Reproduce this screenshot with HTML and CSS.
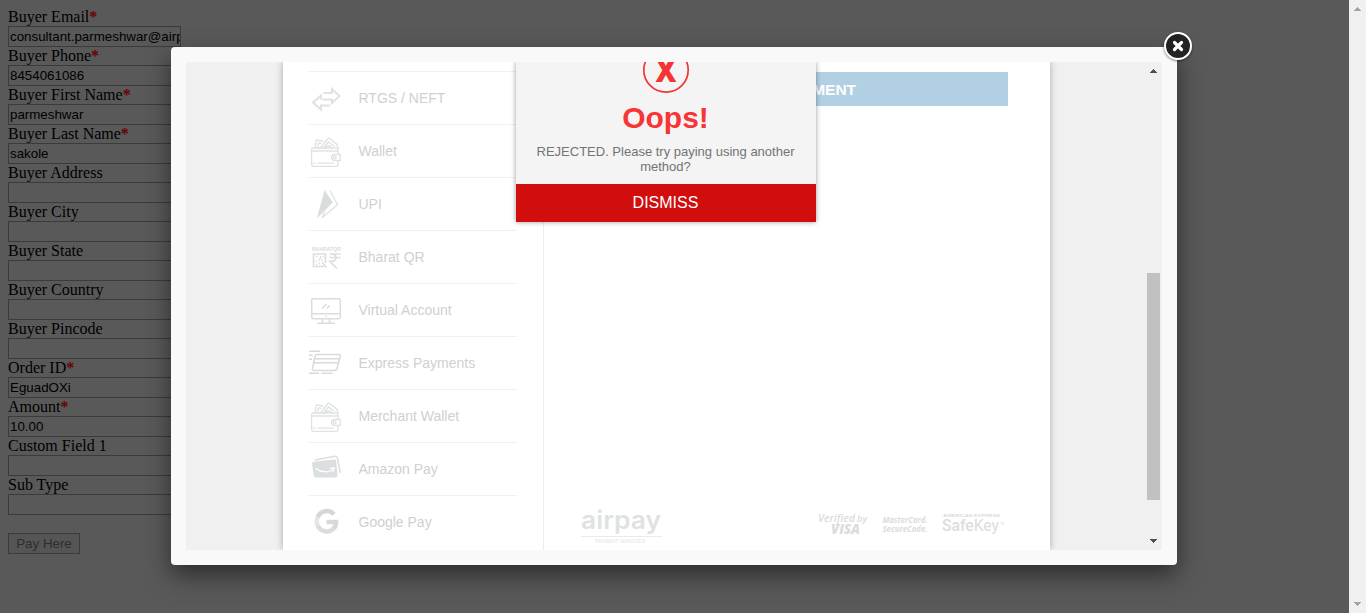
FILE: index.html
```html
<!DOCTYPE html>
<html lang="en">
<head>
<meta charset="utf-8">
<title>Payment</title>
<link rel="stylesheet" href="styles.css">
</head>
<body>
<main class="page">
  <form class="buyer">
    <label>Buyer Email<b>*</b></label><div class="field">consultant.parmeshwar@airpay.co.in</div>
    <label>Buyer Phone<b>*</b></label><div class="field">8454061086</div>
    <label>Buyer First Name<b>*</b></label><div class="field">parmeshwar</div>
    <label>Buyer Last Name<b>*</b></label><div class="field">sakole</div>
    <label>Buyer Address</label><div class="field"></div>
    <label>Buyer City</label><div class="field"></div>
    <label>Buyer State</label><div class="field"></div>
    <label>Buyer Country</label><div class="field"></div>
    <label>Buyer Pincode</label><div class="field"></div>
    <label>Order ID<b>*</b></label><div class="field">EguadOXi</div>
    <label>Amount<b>*</b></label><div class="field">10.00</div>
    <label>Custom Field 1</label><div class="field"></div>
    <label>Sub Type</label><div class="field"></div>
    <button class="pay" type="button">Pay Here</button>
  </form>
  <aside class="page-scroll">
    <svg width="7" height="4" shape-rendering="crispEdges"><path d="M3 0h1v1h1v1h1v1h1v1H0V3h1V2h1V1h1z"/></svg>
    <svg width="7" height="4" shape-rendering="crispEdges"><path d="M0 0h7v1H6v1H5v1H4v1H3V3H2V2H1V1H0z"/></svg>
  </aside>
</main>

<svg class="defs" width="0" height="0">
  <symbol id="wallet" viewBox="0 0 32 32">
    <g fill="none" stroke="#dfe2e3" stroke-width="1.300" transform="translate(0 1)">
      <path d="M5 13 6.300 4l7 1M9.500 13 18 2.500q.7-.7 1.600 0L26.500 8l2 4.500M12.500 13l6-7 6 4.500M15 13q.5-3 3.500-3t3.500 3M7.500 13 8.500 7l3 .4"/>
      <path d="M1.600 13.500q0-1.500 1.500-1.500H26q2 0 2 2v4M1.600 13V28q0 2.300 2 2.300H26q2 0 2-2V25M2 15h25.500M3 27.200h2.500M7.500 27.200h16.500"/>
      <path d="M30.200 18.500H25q-3.500 0-3.500 3t3.500 3h5.200z"/><circle cx="24.700" cy="21.500" r="1.400"/>
    </g>
  </symbol>
</svg>

<section class="lightbox">
  <div class="frame">
    <div class="sheet">
      <nav class="methods">
        <div class="method"><svg class="icon" viewBox="0 0 32 32"><path fill="none" stroke="#dfe2e3" stroke-width="2" d="M13.500 11H22V7l7.500 7-7.500 7v-3.500H12.500M20 23.500h-9V27.500L3 20.500l8-7v4"/></svg>RTGS / NEFT</div>
        <div class="method"><svg class="icon"><use href="#wallet"/></svg>Wallet</div>
        <div class="method"><svg class="icon" viewBox="0 0 32 32"><path fill="none" stroke="#dfe2e3" stroke-width="1.300" d="m20 2.500 7.500 14L12 30l3-7.500"/><path fill="#d8dcdd" stroke="#fff" stroke-width=".5" d="m14.500 1.500 8.500 13L6.500 31z"/></svg>UPI</div>
        <div class="method"><svg class="icon" viewBox="0 0 32 32"><text x="2" y="10" font-size="5" font-weight="700" textLength="29" lengthAdjust="spacingAndGlyphs" fill="#dcdcdc">BHARATQR</text><path fill="none" stroke="#dedede" stroke-width="1.700" d="M15.500 22V13H3.500v12.500H14M12 21l4.500 5.500M19.500 13h11M19.500 16.500h11M20 13c8 0 8 7.500 0 7.500L27 27.500"/><path fill="none" stroke="#dedede" stroke-width="1.300" d="M6 15.500h1.500M10.500 15v2.500l-2 2M13 15v1.500M12 18.500v1.500M6 19.500v1.500M6 23.500h1.500M9.500 21v2.500"/></svg>Bharat QR</div>
        <div class="method"><svg class="icon" viewBox="0 0 32 32"><g fill="none" stroke="#dcdcdc" stroke-width="1.500"><rect x="1.700" y="4.700" width="28.600" height="20" rx="1.500"/><path d="M1.600 19.700h29M12.500 25v4M19.500 25v4M7 29.300h18M12 14.500l4.500-4.500M17 14.500l2.500-3M15.500 22.200h1.500"/></g></svg>Virtual Account</div>
        <div class="method"><svg class="icon express" viewBox="0 0 34 32"><g fill="none" stroke="#dadada" stroke-width="1.500"><path d="M9 7.500h21.500q2 0 1.700 2L29 21.500q-.5 2-2.500 2H6q-2 0-1.500-2L7 9q.3-1.500 2-1.500M7 11.800h24.500M6 15.800h24.500M1 4.300h11M1 8.300h3.500M1 12.300h3M1 26.300h10M13.500 26.300h11"/></g></svg>Express Payments</div>
        <div class="method"><svg class="icon"><use href="#wallet"/></svg>Merchant Wallet</div>
        <div class="method"><svg class="icon" viewBox="0 0 32 32"><path fill="none" stroke="#dcdfe0" stroke-width="1.600" d="m5 7 20-3.700q2-.3 2.500 1.700l2.700 15"/><path fill="#dcdfe0" d="M2 10.500q0-1.500 1.500-1.700L24 6.500q2 0 2.200 1.500l1.300 14q0 2.500-2 2.500H6q-2 0-2.300-2z"/><path fill="none" stroke="#fff" stroke-width="1.300" d="M5.500 15.500q9 6 17 1.500m-2.500-1.500 4-.5-1 4"/></svg>Amazon Pay</div>
        <div class="method"><svg class="icon" viewBox="0 0 32 32"><g fill="none" stroke-width="4.500" transform="translate(-.5 -.8)"><path stroke="#d5d6d7" d="M24.500 9A9.800 9.800 0 0 0 8.200 12"/><path stroke="#e5e6e7" d="M8.200 12a9.800 9.800 0 0 0 0 8.500"/><path stroke="#dadcdd" d="M8.200 20.500A9.800 9.800 0 0 0 24 23.500"/><path stroke="#d7d9da" d="M24 23.500q2.500-2.500 2.500-6.800H17"/></g></svg>Google Pay</div>
      </nav>
      <div class="content">
        <div class="make">MAKE PAYMENT</div>
        <footer class="brands">
          <svg width="82" height="40" viewBox="0 0 82 40"><text class="airpay" x="0" y="24" textLength="80" lengthAdjust="spacingAndGlyphs">airpay</text><path d="M0 31.500h81" stroke="#e8ebec"/><text x="14" y="38" font-size="5" textLength="50" lengthAdjust="spacingAndGlyphs" fill="#e2e4e5">PAYMENT SERVICES</text></svg>
          <svg class="secure" width="190" height="34" viewBox="0 0 190 34">
            <g fill="#dbdcdd" font-family="Open Sans, sans-serif" font-weight="600" font-style="italic">
              <text x="0" y="14" font-size="10.500" textLength="37" lengthAdjust="spacingAndGlyphs">Verified</text><text x="39" y="14" font-size="8.500" textLength="10" lengthAdjust="spacingAndGlyphs">by</text>
              <text x="13" y="26.300" font-size="13.500" font-weight="800" textLength="29" lengthAdjust="spacingAndGlyphs">VISA</text>
              <text x="64.500" y="14.500" font-size="9.500" font-weight="700" textLength="45" lengthAdjust="spacingAndGlyphs">MasterCard.</text><text x="64.500" y="23.500" font-size="9" font-weight="700" textLength="45" lengthAdjust="spacingAndGlyphs">SecureCode.</text>
            </g>
            <text x="125" y="9" font-size="4.200" font-weight="700" textLength="57" lengthAdjust="spacingAndGlyphs" fill="#dadcdd">AMERICAN EXPRESS</text>
            <text class="safe" x="124" y="22.500" textLength="57" lengthAdjust="spacingAndGlyphs"><tspan font-weight="500">Safe</tspan>Key</text><text x="182" y="16.500" font-size="3" fill="#dfe1e2">TM</text>
          </svg>
        </footer>
      </div>
    </div>
    <aside class="inner-scroll">
      <svg width="7" height="4" shape-rendering="crispEdges"><path d="M3 0h1v1h1v1h1v1h1v1H0V3h1V2h1V1h1z"/></svg>
      <div class="thumb"></div>
      <svg width="7" height="4" shape-rendering="crispEdges"><path d="M0 0h7v1H6v1H5v1H4v1H3V3H2V2H1V1H0z"/></svg>
    </aside>
    <div class="alert">
      <svg class="cross" width="48" height="32" viewBox="0 0 48 32"><circle cx="24" cy="8" r="22.200" fill="none" stroke="#f33634" stroke-width="1.700"/><text x="13.500" y="19.500" textLength="21" lengthAdjust="spacingAndGlyphs">X</text></svg>
      <h2>Oops!</h2>
      <p>REJECTED. Please try paying using another method?</p>
      <div class="dismiss">DISMISS</div>
    </div>
  </div>
  <svg class="close" viewBox="0 0 32 32"><circle cx="16" cy="16" r="13" fill="#222" stroke="#fff" stroke-width="2"/><path d="m12.500 12.500 7 7m0-7-7 7" stroke="#fff" stroke-width="3.200" stroke-linecap="round"/></svg>
</section>
</body>
</html>
```
FILE: styles.css
```css
* { box-sizing: border-box; }
body { margin: 0; height: 613px; overflow: hidden; background: #595959; font-family: "Liberation Sans", Arial, sans-serif; }
.page { display: flex; justify-content: space-between; height: 613px; }
.buyer { display: flex; flex-direction: column; padding: 8px; width: 189px; font: 16px/18px "Liberation Serif", serif; color: #000; }
.buyer label { height: 18px; white-space: nowrap; }
.buyer b { color: #6b0000; font-weight: 700; }
.field { height: 21px; width: 173px; padding: 0 1px; border: 1px solid #3b3b3b; overflow: hidden; white-space: nowrap; font: 13.333px/19px "Liberation Sans", sans-serif; }
.pay { margin-top: 18px; width: 72px; height: 21px; padding: 0; border: 1px solid #3b3b3b; background: #555; color: #2e2e2e; font: 13.333px/19px "Liberation Sans", sans-serif; }
.page-scroll { display: flex; flex-direction: column; align-items: center; justify-content: space-between; width: 17px; padding: 7px 0; background: #f0f0f0; fill: #a3a3a3; }
.defs { position: absolute; }
.lightbox { position: absolute; left: 171px; top: 47px; width: 1006px; height: 518px; padding: 15px; border-radius: 4px; background: #f9f9f9; box-shadow: 0 10px 25px rgba(0, 0, 0, .5); }
.close { position: absolute; right: -17px; top: -17px; width: 32px; height: 32px; filter: drop-shadow(0 1px 1px rgba(0, 0, 0, .5)); }
.frame { position: relative; display: flex; height: 488px; padding-left: 97px; overflow: hidden; background: #f0f0f0; justify-content: space-between; }
.sheet { display: flex; width: 767px; height: 488px; background: #fff; box-shadow: 0 0 7px rgba(0, 0, 0, .3); }
.methods { width: 261px; padding: 9px 26px 0; border-right: 1px solid #eee; }
.method { display: flex; align-items: center; gap: 16.500px; height: 53px; width: 208px; border-top: 1px solid #edf0f0; font-size: 14px; color: #d0d0d0; padding-left: 1px; white-space: nowrap; }
.icon { width: 32px; height: 32px; flex: none; }
.icon.express { width: 34px; margin: 0 0 0 -2px; }
.content { flex: 1; display: flex; flex-direction: column; justify-content: space-between; padding: 10px 42px 5px 37px; }
.make { height: 34px; background: #b2d0e4; color: #fff; text-align: center; font: 700 15.500px/35px "Liberation Sans", sans-serif; }
.brands { display: flex; justify-content: space-between; align-items: center; }
.airpay { font: 600 25px Inter, sans-serif; fill: #dfe2e3; }
.safe { font: 400 16px Roboto, sans-serif; fill: #dbdddd; }
.inner-scroll { display: flex; flex-direction: column; align-items: center; width: 17px; padding: 7px 0; fill: #505050; }
.inner-scroll svg { flex: none; }
.thumb { margin-top: 200px; margin-bottom: auto; width: 13px; height: 227px; background: #c1c1c1; }
.alert { position: absolute; left: 330px; top: 0; width: 300px; height: 160px; display: flex; flex-direction: column; align-items: center; background: #f4f4f4; box-shadow: 0 0 5px rgba(0, 0, 0, .4); }
.cross { flex: none; height: 32px; }
.cross text { font: 800 32px "Open Sans", sans-serif; fill: #f33634; }
.alert h2 { margin: 6px 1px 0 0; color: #f83434; font-size: 30px; line-height: 36px; }
.alert p { margin: 8px 1px 0 0; padding: 0 15px; color: #737373; text-align: center; font-size: 13px; line-height: 15px; }
.dismiss { margin-top: auto; width: 100%; padding-right: 1px; height: 38px; background: #d20d0d; color: #fff; text-align: center; font-size: 16px; line-height: 38px; }
```
